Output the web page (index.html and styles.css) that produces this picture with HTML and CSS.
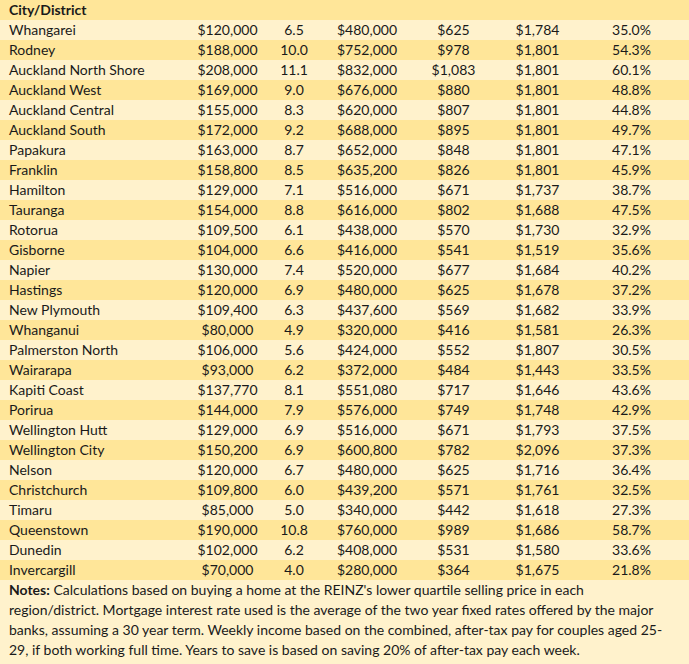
FILE: index.html
```html
<!DOCTYPE html>
<html>
<head>
<meta charset="utf-8">
<link rel="stylesheet" href="styles.css">
</head>
<body>
<div class="sheet">
  <div class="row dark head"><div class="name">City/District</div><div></div><div></div><div></div><div></div><div></div><div></div></div>
  <div class="row light"><div class="name">Whangarei</div><div>$120,000</div><div>6.5</div><div>$480,000</div><div>$625</div><div>$1,784</div><div>35.0%</div></div>
  <div class="row dark"><div class="name">Rodney</div><div>$188,000</div><div>10.0</div><div>$752,000</div><div>$978</div><div>$1,801</div><div>54.3%</div></div>
  <div class="row light"><div class="name">Auckland North Shore</div><div>$208,000</div><div>11.1</div><div>$832,000</div><div>$1,083</div><div>$1,801</div><div>60.1%</div></div>
  <div class="row dark"><div class="name">Auckland West</div><div>$169,000</div><div>9.0</div><div>$676,000</div><div>$880</div><div>$1,801</div><div>48.8%</div></div>
  <div class="row light"><div class="name">Auckland Central</div><div>$155,000</div><div>8.3</div><div>$620,000</div><div>$807</div><div>$1,801</div><div>44.8%</div></div>
  <div class="row dark"><div class="name">Auckland South</div><div>$172,000</div><div>9.2</div><div>$688,000</div><div>$895</div><div>$1,801</div><div>49.7%</div></div>
  <div class="row light"><div class="name">Papakura</div><div>$163,000</div><div>8.7</div><div>$652,000</div><div>$848</div><div>$1,801</div><div>47.1%</div></div>
  <div class="row dark"><div class="name">Franklin</div><div>$158,800</div><div>8.5</div><div>$635,200</div><div>$826</div><div>$1,801</div><div>45.9%</div></div>
  <div class="row light"><div class="name">Hamilton</div><div>$129,000</div><div>7.1</div><div>$516,000</div><div>$671</div><div>$1,737</div><div>38.7%</div></div>
  <div class="row dark"><div class="name">Tauranga</div><div>$154,000</div><div>8.8</div><div>$616,000</div><div>$802</div><div>$1,688</div><div>47.5%</div></div>
  <div class="row light"><div class="name">Rotorua</div><div>$109,500</div><div>6.1</div><div>$438,000</div><div>$570</div><div>$1,730</div><div>32.9%</div></div>
  <div class="row dark"><div class="name">Gisborne</div><div>$104,000</div><div>6.6</div><div>$416,000</div><div>$541</div><div>$1,519</div><div>35.6%</div></div>
  <div class="row light"><div class="name">Napier</div><div>$130,000</div><div>7.4</div><div>$520,000</div><div>$677</div><div>$1,684</div><div>40.2%</div></div>
  <div class="row dark"><div class="name">Hastings</div><div>$120,000</div><div>6.9</div><div>$480,000</div><div>$625</div><div>$1,678</div><div>37.2%</div></div>
  <div class="row light"><div class="name">New Plymouth</div><div>$109,400</div><div>6.3</div><div>$437,600</div><div>$569</div><div>$1,682</div><div>33.9%</div></div>
  <div class="row dark"><div class="name">Whanganui</div><div>$80,000</div><div>4.9</div><div>$320,000</div><div>$416</div><div>$1,581</div><div>26.3%</div></div>
  <div class="row light"><div class="name">Palmerston North</div><div>$106,000</div><div>5.6</div><div>$424,000</div><div>$552</div><div>$1,807</div><div>30.5%</div></div>
  <div class="row dark"><div class="name">Wairarapa</div><div>$93,000</div><div>6.2</div><div>$372,000</div><div>$484</div><div>$1,443</div><div>33.5%</div></div>
  <div class="row light"><div class="name">Kapiti Coast</div><div>$137,770</div><div>8.1</div><div>$551,080</div><div>$717</div><div>$1,646</div><div>43.6%</div></div>
  <div class="row dark"><div class="name">Porirua</div><div>$144,000</div><div>7.9</div><div>$576,000</div><div>$749</div><div>$1,748</div><div>42.9%</div></div>
  <div class="row light"><div class="name">Wellington Hutt</div><div>$129,000</div><div>6.9</div><div>$516,000</div><div>$671</div><div>$1,793</div><div>37.5%</div></div>
  <div class="row dark"><div class="name">Wellington City</div><div>$150,200</div><div>6.9</div><div>$600,800</div><div>$782</div><div>$2,096</div><div>37.3%</div></div>
  <div class="row light"><div class="name">Nelson</div><div>$120,000</div><div>6.7</div><div>$480,000</div><div>$625</div><div>$1,716</div><div>36.4%</div></div>
  <div class="row dark"><div class="name">Christchurch</div><div>$109,800</div><div>6.0</div><div>$439,200</div><div>$571</div><div>$1,761</div><div>32.5%</div></div>
  <div class="row light"><div class="name">Timaru</div><div>$85,000</div><div>5.0</div><div>$340,000</div><div>$442</div><div>$1,618</div><div>27.3%</div></div>
  <div class="row dark"><div class="name">Queenstown</div><div>$190,000</div><div>10.8</div><div>$760,000</div><div>$989</div><div>$1,686</div><div>58.7%</div></div>
  <div class="row light"><div class="name">Dunedin</div><div>$102,000</div><div>6.2</div><div>$408,000</div><div>$531</div><div>$1,580</div><div>33.6%</div></div>
  <div class="row dark"><div class="name">Invercargill</div><div>$70,000</div><div>4.0</div><div>$280,000</div><div>$364</div><div>$1,675</div><div>21.8%</div></div>
  <p class="notes"><b>Notes:</b> Calculations based on buying a home at the REINZ's lower quartile selling price in each<br>region/district. Mortgage interest rate used is the average of the two year fixed rates offered by the major<br>banks, assuming a 30 year term. Weekly income based on the combined, after-tax pay for couples aged 25-<br>29, if both working full time. Years to save is based on saving 20% of after-tax pay each week.</p>
</div>
</body>
</html>
```
FILE: styles.css
```css
html, body {
  margin: 0;
  padding: 0;
  background: #fff2cc;
}
.sheet {
  width: 689px;
  font-family: Lato, "Open Sans", sans-serif;
  font-size: 14px;
  color: #1a1a1a;
}
.row {
  display: grid;
  grid-template-columns: 195px 65px 68px 78px 95px 73px 115px;
  height: 20px;
  line-height: 20px;
  text-align: center;
  white-space: nowrap;
}
.row .name {
  text-align: left;
  padding-left: 9px;
}
.dark { background: #ffe699; }
.light { background: #fff2cc; }
.head { font-weight: bold; }
.notes {
  margin: 0;
  padding: 0 0 4px 9px;
  line-height: 20px;
  background: #fff2cc;
  white-space: nowrap;
}
```
